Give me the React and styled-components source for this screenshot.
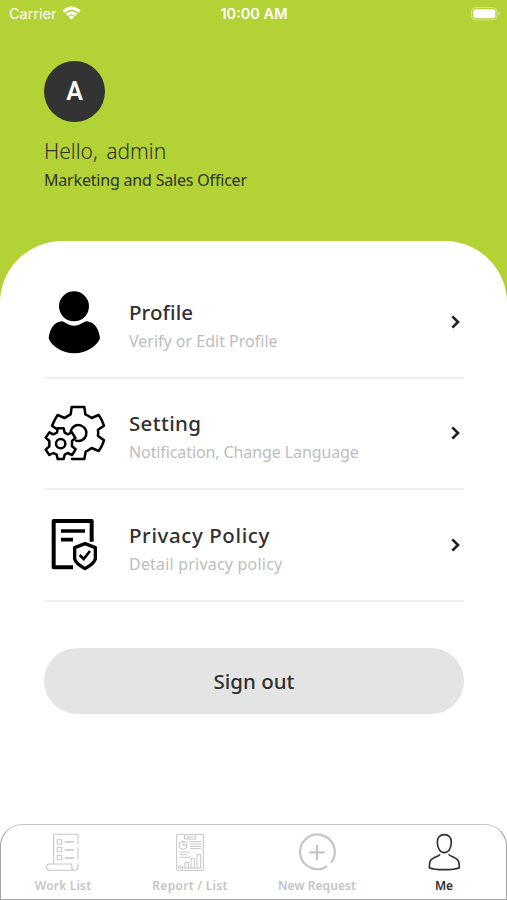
import React, { useState } from 'react';
import styled, { createGlobalStyle } from 'styled-components';

const menuItems = [
    {id: 'profile', title: 'Profile', detail: 'Verify or Edit Profile', icon: ProfileIcon, titleSpacing: 0.1, detailSpacing: 0},
    {id: 'setting', title: 'Setting', detail: 'Notification, Change Language', icon: SettingIcon, titleSpacing: 0.35, detailSpacing: -0.1},
    {id: 'privacy', title: 'Privacy Policy', detail: 'Detail privacy policy', icon: PrivacyIcon, titleSpacing: 0.6, detailSpacing: 0.2},
];

const tabs = [
    {id: 'work', label: 'Work List', icon: WorkIcon, spacing: 0.2},
    {id: 'report', label: 'Report / List', icon: ReportIcon, spacing: 0.3},
    {id: 'request', label: 'New Request', icon: RequestIcon, spacing: 0.1},
    {id: 'me', label: 'Me', icon: MeIcon, spacing: 0},
];

export default function App() {
    const [activeTab, setActiveTab] = useState('me');

    return (
        <>
            <GlobalStyle/>
            <Screen>
                <StatusBar>
                    <Carrier>
                        <span>Carrier</span>
                        <WifiIcon/>
                    </Carrier>
                    <Clock>10:00 AM</Clock>
                    <BatteryIcon/>
                </StatusBar>
                <Header>
                    <Avatar>A</Avatar>
                    <Greeting>Hello, admin</Greeting>
                    <Position>Marketing and Sales Officer</Position>
                </Header>
                <Card>
                    {menuItems.map(({id, title, detail, icon: Icon, titleSpacing, detailSpacing}) => (
                        <MenuRow key={id}>
                            <Icon/>
                            <MenuText>
                                <MenuTitle $spacing={titleSpacing}>{title}</MenuTitle>
                                <MenuDetail $spacing={detailSpacing}>{detail}</MenuDetail>
                            </MenuText>
                            <ChevronIcon/>
                        </MenuRow>
                    ))}
                    <SignOutButton>Sign out</SignOutButton>
                </Card>
                <TabBar>
                    {tabs.map(({id, label, icon: Icon, spacing}) => (
                        <Tab key={id} $active={id === activeTab} onClick={() => {
                            setActiveTab(id)
                        }}>
                            <Icon/>
                            <TabLabel $spacing={spacing}>{label}</TabLabel>
                        </Tab>
                    ))}
                </TabBar>
            </Screen>
        </>
    );
}

function WifiIcon() {
    return (
        <svg width="19" height="15" viewBox="0 0 57 45" fill="#fff">
            <path d="M1 13Q28.500 -10 56 13L49 20Q28.500 3 8 20Z"/>
            <path d="M11 23Q28.500 8 46 23L39 30Q28.500 20 18 30Z"/>
            <path d="M20 32Q28.500 25 37 32L28.500 41Z"/>
        </svg>
    );
}

function BatteryIcon() {
    return (
        <svg width="30" height="14" viewBox="0 0 30 14">
            <rect x="0.500" y="0.500" width="25.500" height="12.500" rx="4" fill="none" stroke="#fff" strokeOpacity="0.400"/>
            <rect x="2.300" y="2.300" width="22" height="9" rx="2" fill="#fff"/>
            <path d="M27.500 4.800Q30 6.800 27.500 8.800Z" fill="#fff" fillOpacity="0.500"/>
        </svg>
    );
}

function ProfileIcon() {
    return (
        <svg width="62" height="64" viewBox="0 -3 186 192">
            <circle cx="90" cy="46" r="45"/>
            <path d="M52 91C62 90 70 104 90 104S119 90 129 91C153 94 165 116 168 142C160 164 128 187 91 187S21 164 14 142C17 116 29 94 52 91Z"/>
        </svg>
    );
}

function SettingIcon() {
    return (
        <svg width="62" height="64" viewBox="42 33 186 192" fill="none" stroke="#000" strokeWidth="7.500" strokeLinejoin="round" strokeLinecap="round">
            <path d="M80 117L66 107Q74 88 83 75L104 84Q112 78 122 73L125 51H163L166 73Q176 77 185 84L206 75Q216 88 222 107L204 119Q205 128 204 138L222 151Q216 170 206 183L185 174Q176 181 167 185L163 207H126"/>
            <path d="M122 123A24 24 0 1 1 138 152"/>
            <path d="M81 128L83 115H101L104 128L113 133L126 127L136 144L126 153V169L137 178L126 195L113 189L104 194L101 207H83L80 194L70 189L58 195L47 179L58 169V153L47 143L58 127L70 133Z"/>
            <circle cx="92" cy="161" r="14"/>
        </svg>
    );
}

function PrivacyIcon() {
    return (
        <svg width="62" height="64" viewBox="42 38 186 192" fill="none" stroke="#000">
            <path d="M129 201H71V62H185V124" strokeWidth="12" strokeLinejoin="round"/>
            <path d="M93 92H165M93 118H129" strokeWidth="11"/>
            <path d="M165 130L196 142V176Q192 190 165 205Q138 190 134 176V142Z" strokeWidth="10" strokeLinejoin="round"/>
            <path d="M149 164L161 176L180 152" strokeWidth="8"/>
        </svg>
    );
}

function ChevronIcon() {
    return (
        <svg width="10" height="14" viewBox="0 0 30 42" fill="none" stroke="#222" strokeWidth="8">
            <path d="M4 4L21 21L4 38"/>
        </svg>
    );
}

function WorkIcon() {
    return (
        <svg width="34" height="40" viewBox="136 54 102 120" fill="none" stroke="currentColor" strokeWidth="3.200">
            <path d="M159 146V60Q159 58 161 58H232V89M232 97V136M232 144V154Q232 166 221 166H145Q138 166 138 156T146 147H211Q214 150 214 158T221 166"/>
            <path d="M170 74H183V87H170ZM170 97H183V110H170ZM170 121H183V134H170Z"/>
            <path d="M192 81H221M192 105H221M192 129H221" strokeWidth="4"/>
        </svg>
    );
}

function ReportIcon() {
    return (
        <svg width="34" height="40" viewBox="130 54 102 120" fill="none" stroke="currentColor" strokeWidth="3">
            <path d="M165 58H141V166H221V58H198"/>
            <path d="M165 59H198V72H165ZM172 66H191"/>
            <circle cx="160" cy="91" r="12"/>
            <path d="M160 79V91H172M181 80H215M181 87H215M181 94H215M181 101H215M150 111H181M150 119H172M150 127H181"/>
            <path d="M147 159V153H158V159M166 159V142H176V159M184 159V130H194V159M202 159V119H213V159M147 159H216"/>
        </svg>
    );
}

function RequestIcon() {
    return (
        <svg width="38" height="40" viewBox="146 54 114 120" fill="none" stroke="currentColor" strokeWidth="6.500">
            <path d="M233 154A52 52 0 1 1 245 143"/>
            <path d="M203 89V136M180 112H226"/>
        </svg>
    );
}

function MeIcon() {
    return (
        <svg width="34" height="40" viewBox="151 54 102 120" fill="none" stroke="currentColor" strokeWidth="5">
            <path d="M203 59C190 59 181 68 182 82C182 99 190 113 203 113S224 99 224 82C225 68 216 59 203 59Z"/>
            <path d="M190 118C186 126 165 126 160 140Q158 148 158 158C176 166 230 166 248 158Q248 148 246 140C241 126 221 126 216 118"/>
        </svg>
    );
}

const GlobalStyle = createGlobalStyle`
  body {
    margin: 0;
    background: #fff;
  }
  * {
    box-sizing: border-box;
  }
`;

const Screen = styled.div`
  display: flex;
  flex-direction: column;
  width: 507px;
  height: 900px;
  overflow: hidden;
  background: #b2d235;
  color: #303030;
  font-family: 'Noto Sans', sans-serif;
`;

const StatusBar = styled.div`
  display: grid;
  grid-template-columns: 1fr auto 1fr;
  align-items: center;
  height: 27px;
  padding: 0 6px 0 9px;
  color: #fff;
  font-family: Inter, sans-serif;
  font-size: 14.5px;
  & > svg {
    justify-self: end;
  }
`;

const Carrier = styled.div`
  display: flex;
  align-items: center;
  gap: 5px;
`;

const Clock = styled.div`
  margin-right: 2px;
  font-weight: 600;
`;

const Header = styled.header`
  height: 214px;
  padding: 34px 44px 0;
`;

const Avatar = styled.div`
  display: flex;
  align-items: center;
  justify-content: center;
  width: 61px;
  height: 61px;
  border-radius: 50%;
  background: #333;
  color: #fff;
  font-family: Roboto, sans-serif;
  font-size: 25px;
  font-weight: 600;
`;

const Greeting = styled.h1`
  margin: 13px 0 0;
  font-size: 21px;
  font-weight: 300;
  line-height: 32px;
  word-spacing: 3px;
  white-space: nowrap;
`;

const Position = styled.p`
  margin: 0;
  font-size: 16px;
  font-weight: 400;
  line-height: 26px;
  letter-spacing: -0.19px;
  white-space: nowrap;
`;

const Card = styled.main`
  flex: 1;
  padding: 26px 43px 0 44px;
  border-radius: 62px 62px 0 0;
  background: #fff;
`;

const MenuRow = styled.div`
  display: flex;
  align-items: center;
  height: 111.500px;
  padding-right: 3px;
  border-bottom: 2px solid #f1f1f1;
  cursor: pointer;
`;

const MenuText = styled.div`
  flex: 1;
  margin-left: 23px;
  padding-top: 7px;
  white-space: nowrap;
`;

const MenuTitle = styled.h2`
  margin: 0;
  font-size: 20.5px;
  font-weight: 500;
  line-height: 30px;
  letter-spacing: ${({$spacing}) => $spacing}px;
`;

const MenuDetail = styled.p`
  margin: 1px 0 0;
  color: #bdbdbd;
  font-size: 16px;
  font-weight: 400;
  line-height: 26px;
  letter-spacing: ${({$spacing}) => $spacing}px;
`;

const SignOutButton = styled.button`
  display: block;
  width: 420px;
  height: 66px;
  margin-top: 46px;
  padding: 0;
  border: 0;
  border-radius: 33px;
  background: #e4e4e4;
  color: #303030;
  font-family: inherit;
  font-size: 20.5px;
  font-weight: 500;
`;

const TabBar = styled.nav`
  display: grid;
  grid-template-columns: repeat(4, 127px);
  justify-content: center;
  height: 76px;
  border: 1px solid #a5a5a5;
  border-top-color: #c4c4c4;
  border-radius: 22px 22px 0 0;
  background: #fff;
  box-shadow: 0 0 0 30px #fff;
`;

const Tab = styled.button`
  display: flex;
  flex-direction: column;
  align-items: center;
  padding: 8px 0 0;
  border: 0;
  background: none;
  color: ${({$active}) => $active ? '#303030' : '#c5c5c5'};
  font-family: inherit;
`;

const TabLabel = styled.span`
  margin-top: 4px;
  font-size: 12px;
  font-weight: 600;
  line-height: 18px;
  white-space: nowrap;
  letter-spacing: ${({$spacing}) => $spacing}px;
`;
